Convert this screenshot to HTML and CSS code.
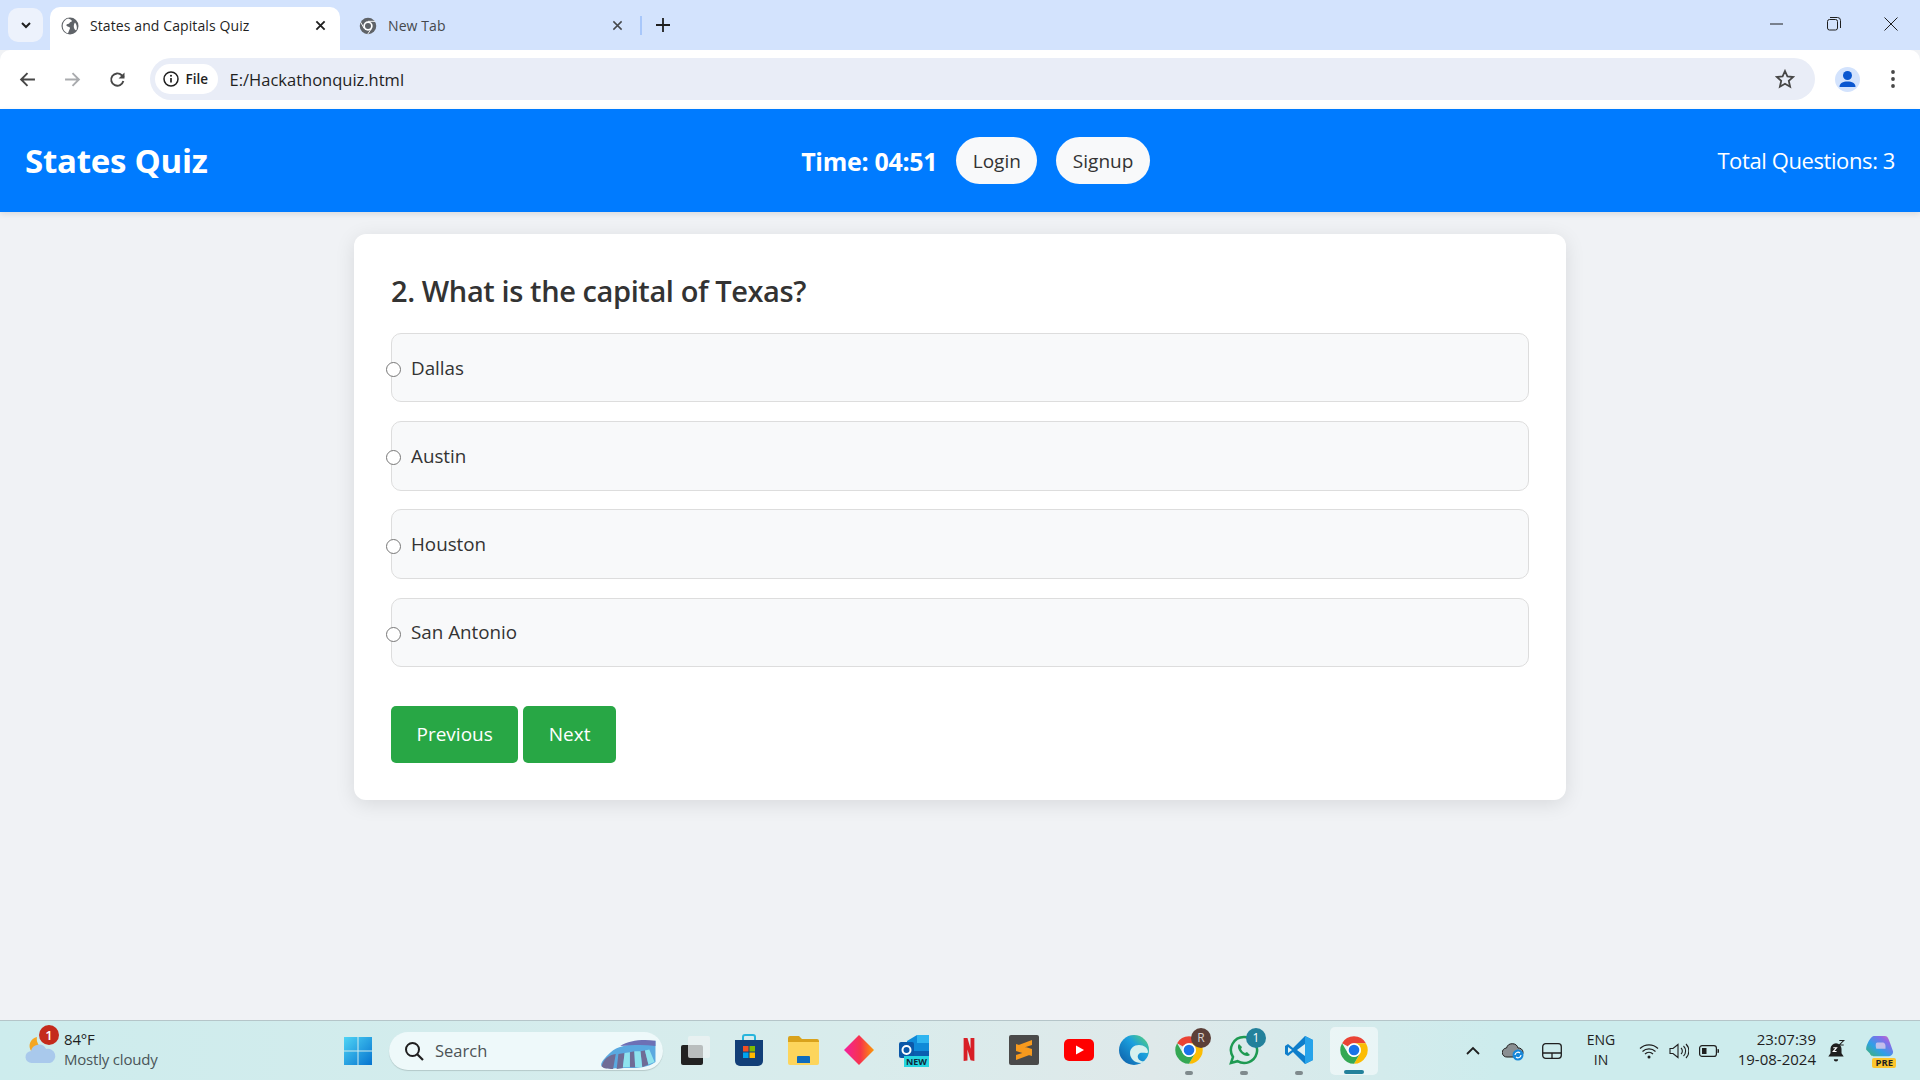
FILE: index.html
```html
<!DOCTYPE html>
<html lang="en">
<head>
    <meta charset="UTF-8">
    <meta name="viewport" content="width=device-width, initial-scale=1.0">
    <title>States and Capitals Quiz</title>
    <link rel="stylesheet" href="styles.css">
</head>
<body>
    <svg class="defs" width="0" height="0">
        <symbol id="chrome" viewBox="0 0 48 48">
            <path fill="#ea4335" d="M24 2A22 22 0 0 1 43.05 13H24A11 11 0 0 0 14.47 18.5L4.95 13A22 22 0 0 1 24 2Z"/>
            <path fill="#fbbc04" d="M43.05 13A22 22 0 0 1 24 46L33.53 29.5A11 11 0 0 0 24 13Z"/>
            <path fill="#34a853" d="M4.95 13L14.47 29.5A11 11 0 0 0 33.53 29.5L24 46A22 22 0 0 1 4.95 13Z"/>
            <circle cx="24" cy="24" r="11" fill="#fff"/>
            <circle cx="24" cy="24" r="8.5" fill="#1a73e8"/>
        </symbol>
    </svg>

    <div class="screen">
        <!-- browser tabs -->
        <div class="tabstrip">
            <div class="tab-search">
                <svg width="12" height="12" viewBox="0 0 12 12"><path d="M2 4l4 4 4-4" fill="none" stroke="#1f1f1f" stroke-width="2"/></svg>
            </div>
            <div class="tab tab-active">
                <svg class="favicon" viewBox="0 0 18 18"><circle cx="9" cy="9" r="8.5" fill="#5f6368"/><path fill="#fff" d="M7 1.500c2 .6 3.500 1.300 4 2.500-.8 1.200-2.200 1-2.600 2.200-.6 1.200-2.700.4-3 1.800-.3 1.200 1.500 1.700 2.800 2 1 .3 1 1.500.3 2.500L7 16.300C4 15.500 1.700 12.500 1.700 9 1.700 5.500 4 2.500 7 1.500zM14 5.500c1.500 1.500 2.500 5 1.500 7.500-1 .5-2-.5-2.500-2-.4-1.500-.3-4 1-5.500z"/></svg>
                <span class="tab-title">States and Capitals Quiz</span>
                <svg class="tab-close" viewBox="0 0 12 12"><path d="M1.500 1.500l9 9M10.500 1.500l-9 9" stroke="#1f1f1f" stroke-width="2"/></svg>
            </div>
            <div class="tab">
                <svg class="favicon" viewBox="0 0 48 48"><circle cx="24" cy="24" r="22" fill="#5f6368"/><circle cx="24" cy="24" r="12.500" fill="#fff"/><circle cx="24" cy="24" r="8" fill="#5f6368"/><path d="M24 11.500H43M14 31L4.500 14M33 31L23 46" stroke="#fff" stroke-width="2.500"/></svg>
                <span class="tab-title tab-title-dim">New Tab</span>
                <svg class="tab-close" viewBox="0 0 12 12"><path d="M1.500 1.500l9 9M10.500 1.500l-9 9" stroke="#45484c" stroke-width="1.600"/></svg>
            </div>
            <div class="tab-sep"></div>
            <svg class="tab-plus" viewBox="0 0 14 14"><path d="M7 0v14M0 7h14" stroke="#1f1f1f" stroke-width="1.800"/></svg>
            <div class="win-controls">
                <svg viewBox="0 0 14 14"><path d="M0 7h13" stroke="#1f1f1f"/></svg>
                <svg viewBox="0 0 14 14"><rect x=".5" y="2.500" width="10" height="10.500" rx="2" fill="none" stroke="#1f1f1f"/><path d="M3 .5h7.500a3 3 0 0 1 3 3V11" fill="none" stroke="#1f1f1f"/></svg>
                <svg viewBox="0 0 14 14"><path d="M.5.5l13 13M13.500.5l-13 13" stroke="#1f1f1f"/></svg>
            </div>
        </div>

        <!-- address bar -->
        <div class="toolbar">
            <svg class="nav-icon" viewBox="0 0 16 16"><path d="M15 8H2M8 2L2 8l6 6" fill="none" stroke="#474747" stroke-width="1.800"/></svg>
            <svg class="nav-icon" viewBox="0 0 16 16"><path d="M1 8h13M8 2l6 6-6 6" fill="none" stroke="#a9abae" stroke-width="1.800"/></svg>
            <svg class="nav-icon" viewBox="0 0 16 16"><path d="M13.500 9.500A5.800 5.800 0 1 1 12 4L14 6" fill="none" stroke="#474747" stroke-width="1.800"/><path d="M14.600 1.500V7H9z" fill="#474747"/></svg>
            <div class="omnibox">
                <div class="site-chip">
                    <svg width="16" height="16" viewBox="0 0 16 16"><circle cx="8" cy="8" r="7" fill="none" stroke="#1f1f1f" stroke-width="1.500"/><path d="M8 7v4.500" stroke="#1f1f1f" stroke-width="1.700"/><circle cx="8" cy="4.800" r="1" fill="#1f1f1f"/></svg>
                    <span>File</span>
                </div>
                <span class="url">E:/Hackathonquiz.html</span>
                <svg class="star" viewBox="0 0 20 20"><path d="M10 2l2.400 5.400 5.800.6-4.400 3.900 1.300 5.800L10 14.700l-5.100 3 1.300-5.800L1.800 8l5.800-.6z" fill="none" stroke="#474747" stroke-width="1.800"/></svg>
            </div>
            <div class="avatar">
                <svg width="19" height="19" viewBox="0 0 19 19"><circle cx="9.500" cy="5.500" r="4.500" fill="#0b57d0"/><path d="M1.500 17c0-4 3.500-5.500 8-5.500s8 1.500 8 5.500z" fill="#0b57d0"/></svg>
            </div>
            <svg class="kebab" viewBox="0 0 4 18"><circle cx="2" cy="2" r="1.900" fill="#474747"/><circle cx="2" cy="9" r="1.900" fill="#474747"/><circle cx="2" cy="16" r="1.900" fill="#474747"/></svg>
        </div>

        <!-- the quiz page -->
        <div class="page">
            <header class="quiz-header">
                <h1 class="quiz-title">States Quiz</h1>
                <div class="header-center">
                    <span class="timer">Time: 04:51</span>
                    <button class="pill-btn">Login</button>
                    <button class="pill-btn">Signup</button>
                </div>
                <span class="total">Total Questions: 3</span>
            </header>

            <main class="quiz-card">
                <h2 class="question">2. What is the capital of Texas?</h2>
                <label class="option"><input type="radio" name="answer"><span>Dallas</span></label>
                <label class="option"><input type="radio" name="answer"><span>Austin</span></label>
                <label class="option"><input type="radio" name="answer"><span>Houston</span></label>
                <label class="option"><input type="radio" name="answer"><span>San Antonio</span></label>
                <div class="quiz-actions">
                    <button class="green-btn">Previous</button>
                    <button class="green-btn">Next</button>
                </div>
            </main>
        </div>

        <!-- windows taskbar -->
        <footer class="taskbar">
            <div class="weather">
                <div class="weather-icon">
                    <svg width="32" height="30" viewBox="0 0 32 30"><path d="M12 1a9 9 0 1 0 10 12A10 10 0 0 1 12 1z" fill="#f5a623"/><path d="M7 27a6 6 0 0 1-1-12 8 8 0 0 1 15-2 7 7 0 0 1 4 14z" fill="#a9c9ec"/></svg>
                    <span class="weather-badge">1</span>
                </div>
                <div class="weather-text">
                    <span class="temp">84°F</span>
                    <span class="sky">Mostly cloudy</span>
                </div>
            </div>
            <div class="start-btn">
                <svg width="30" height="30" viewBox="0 0 30 30">
                    <defs><linearGradient id="win" x1="0" y1="0" x2="1" y2="1"><stop offset="0" stop-color="#4fd4f5"/><stop offset="1" stop-color="#0573cf"/></linearGradient></defs>
                    <path fill="url(#win)" d="M1 1h13.500v13.500H1zM15.500 1H29v13.500H15.500zM1 15.500h13.500V29H1zM15.500 15.500H29V29H15.500z"/>
                </svg>
            </div>
            <div class="search-box">
                <svg width="20" height="20" viewBox="0 0 20 20"><circle cx="8.500" cy="8.500" r="6.500" fill="none" stroke="#1f1f1f" stroke-width="2"/><path d="M13 13l6 6" stroke="#1f1f1f" stroke-width="2.200"/></svg>
                <span>Search</span>
                <svg class="search-art" width="64" height="30" viewBox="0 0 64 34">
                    <path d="M8 18C16 10 24 7 40 6c8-.5 16-3 22-4v24c-8 6-20 7-30 7-14 0-26 2-31-2-2-3 2-8 7-13z" fill="#5aa9e0"/>
                    <path d="M22 8c10-6 24-8 40-6v6C48 6 34 7 22 8z" fill="#6d70b5"/>
                    <path d="M1 31c2-8 8-13 16-14l-3 17c-6 0-11 0-13-3zM20 17l7-1-2 17-7 1zM33 15l5-1 1 18h-6zM45 14l5-1 4 16-7 3z" fill="#6f6c96"/>
                    <path d="M27 16l6-1v17h-8zM38 14l7 0 2 18h-8zM50 13l5-1 6 14-7 3z" fill="#8fe3ee"/>
                </svg>
            </div>
            <div class="task-icons">
                <div class="task-cell">
                    <svg class="taskview" width="30" height="30" viewBox="0 0 30 30"><rect x="0" y="10" width="22" height="20" rx="2" fill="#222"/><rect x="7" y="1" width="22" height="22" rx="2" fill="#eef3f3" opacity=".75"/></svg>
                </div>
                <div class="task-cell">
                    <svg width="30" height="32" viewBox="0 0 30 32"><path d="M9 7V3a2 2 0 0 1 2-2h8a2 2 0 0 1 2 2v4" fill="none" stroke="#27b5dc" stroke-width="2"/><path d="M1 6h28v21a5 5 0 0 1-5 5H6a5 5 0 0 1-5-5z" fill="#123f78"/><rect x="9" y="12" width="5.500" height="5.500" fill="#f25022"/><rect x="15.500" y="12" width="5.500" height="5.500" fill="#7fba00"/><rect x="9" y="18.500" width="5.500" height="5.500" fill="#00a4ef"/><rect x="15.500" y="18.500" width="5.500" height="5.500" fill="#ffb900"/></svg>
                </div>
                <div class="task-cell">
                    <svg width="31" height="30" viewBox="0 0 31 30"><path d="M0 3a2 2 0 0 1 2-2h9l3 3h15a2 2 0 0 1 2 2v4H0z" fill="#d9a21c"/><path d="M0 7h31v21a2 2 0 0 1-2 2H2a2 2 0 0 1-2-2z" fill="#fdd55c"/><path d="M9 22a1 1 0 0 1 1-1h11a1 1 0 0 1 1 1v6H9z" fill="#0f6cbd"/></svg>
                </div>
                <div class="task-cell">
                    <svg width="30" height="30" viewBox="0 0 30 30"><defs><linearGradient id="dia" x1="0" y1="0" x2="1" y2="0"><stop offset="0" stop-color="#f31fa0"/><stop offset=".55" stop-color="#f7354a"/><stop offset="1" stop-color="#fb9a07"/></linearGradient></defs><path d="M15 0l15 15-15 15L0 15z" fill="url(#dia)"/></svg>
                </div>
                <div class="task-cell outlook">
                    <svg width="30" height="30" viewBox="0 0 30 30"><path d="M8 6l10-6h12v16H8z" fill="#0f8ad8"/><path d="M18 0h12v8H18z" fill="#2fb5f0"/><path d="M8 16h22v12a2 2 0 0 1-2 2H10z" fill="#0a5fb0"/><rect x="0" y="7" width="15" height="16" rx="2" fill="#0b58a8"/><circle cx="7.500" cy="15" r="4" fill="none" stroke="#fff" stroke-width="2"/></svg>
                    <span class="new-tag">NEW</span>
                </div>
                <div class="task-cell">
                    <svg width="12" height="23" viewBox="0 0 14 30"><path d="M0 0h5l4 14V0h5v30l-5-1-4-14v14.500L0 30z" fill="#d81f26"/></svg>
                </div>
                <div class="task-cell">
                    <svg width="30" height="30" viewBox="0 0 30 30"><rect width="30" height="30" rx="2" fill="#4a4a4a"/><path d="M23 5L7 11v5l16 5v-5L12 13.500 23 10zM7 25l16-6v-5L7 9v5l11 2.500L7 20z" fill="#f79a1d"/></svg>
                </div>
                <div class="task-cell">
                    <svg width="30" height="22" viewBox="0 0 30 22"><rect width="30" height="22" rx="5" fill="#f00"/><path d="M12 6.500l8 4.500-8 4.500z" fill="#fff"/></svg>
                </div>
                <div class="task-cell">
                    <svg width="30" height="30" viewBox="0 0 30 30"><defs><linearGradient id="edge" x1="0" y1="1" x2="1" y2="0"><stop offset="0" stop-color="#0c59a4"/><stop offset=".6" stop-color="#1ba0de"/><stop offset="1" stop-color="#5fd86a"/></linearGradient></defs><circle cx="15" cy="15" r="15" fill="url(#edge)"/><path d="M29 17c0-4-4-7-9-7-5 0-9 3.500-9 8 0 6 5 10 11 10 2.500 0 4-1 5.500-2-3.500 1-7.500 0-8.500-3-.7-2 0-4 2-5 3-1 8 1 8-1z" fill="#d6f0ee"/></svg>
                </div>
                <div class="task-cell">
                    <svg width="30" height="30"><use href="#chrome"/></svg>
                    <span class="app-badge app-badge-brown">R</span>
                    <span class="run-dot"></span>
                </div>
                <div class="task-cell">
                    <svg width="30" height="30" viewBox="0 0 30 30"><path d="M15 2A13 13 0 0 0 4 22L2 28l6.500-1.800A13 13 0 1 0 15 2z" fill="none" stroke="#1e9a52" stroke-width="2.500"/><path d="M10 9c-2 2-1 6 2 9s7 4 9 2l-3-3-2 1c-2-1-3-2-4-4l1-2z" fill="#1e9a52"/></svg>
                    <span class="app-badge app-badge-teal">1</span>
                    <span class="run-dot"></span>
                </div>
                <div class="task-cell">
                    <svg width="30" height="30" viewBox="0 0 30 30"><path d="M21 1l8 4v20l-8 4L9 17l-5 4-3-2v-8l3-2 5 4z" fill="#0e7ecb"/><path d="M21 1l8 4v20l-8 4z" fill="#27a3ea"/><path d="M21 9v12l-8-6z" fill="#dff1f3"/><path d="M4 12l4 3-4 3z" fill="#dff1f3"/></svg>
                    <span class="run-dot"></span>
                </div>
                <div class="task-cell task-active">
                    <svg width="30" height="30"><use href="#chrome"/></svg>
                    <span class="run-bar"></span>
                </div>
            </div>
            <div class="tray">
                <svg class="tray-icon chev" viewBox="0 0 16 16"><path d="M2 11l6-6 6 6" fill="none" stroke="#1f1f1f" stroke-width="1.800"/></svg>
                <svg class="tray-icon cloud" viewBox="0 0 22 20"><path d="M5 16a4.500 4.500 0 0 1-.5-9A6 6 0 0 1 16 7a4.500 4.500 0 0 1 1 9z" fill="#8a8f92" stroke="#1f1f1f"/><circle cx="16" cy="14" r="5.500" fill="#1687d9"/><path d="M13 14a3 3 0 0 1 5-2M19 14a3 3 0 0 1-5 2" fill="none" stroke="#fff" stroke-width="1.200"/></svg>
                <svg class="tray-icon pad" viewBox="0 0 20 16"><rect x=".7" y=".7" width="18.600" height="14.600" rx="3" fill="none" stroke="#1f1f1f" stroke-width="1.300"/><path d="M1 10h18M10 10v5" stroke="#1f1f1f" stroke-width="1.300"/></svg>
                <div class="lang"><span>ENG</span><span>IN</span></div>
                <svg class="tray-icon wifi" viewBox="0 0 20 16"><path d="M1 5.500a13 13 0 0 1 18 0M3.500 8.500a9.500 9.500 0 0 1 13 0M6 11a6 6 0 0 1 8 0" fill="none" stroke="#1f1f1f" stroke-width="1.200"/><circle cx="10" cy="14" r="1.500" fill="#1f1f1f"/></svg>
                <svg class="tray-icon vol" viewBox="0 0 20 16"><path d="M1 5.500h3L9 1.500v13l-5-4H1z" fill="none" stroke="#1f1f1f" stroke-width="1.100"/><path d="M12 5a4 4 0 0 1 0 6M14.500 3a7 7 0 0 1 0 10M17 1a10 10 0 0 1 0 14" fill="none" stroke="#1f1f1f" stroke-width="1.100"/></svg>
                <svg class="tray-icon batt" viewBox="0 0 20 12"><rect x=".6" y=".6" width="16.800" height="10.800" rx="2.500" fill="none" stroke="#1f1f1f" stroke-width="1.200"/><rect x="3" y="3" width="4.500" height="6" fill="#1f1f1f"/><path d="M18.500 4h.5a1 1 0 0 1 1 1v2a1 1 0 0 1-1 1h-.5z" fill="#1f1f1f"/></svg>
                <div class="clock"><span>23:07:39</span><span>19-08-2024</span></div>
                <svg class="tray-icon bell" viewBox="0 0 18 20"><path d="M9 3a5 5 0 0 0-5 5v4l-2 3h14l-2-3V8a5 5 0 0 0-5-5z" fill="#1f1f1f"/><path d="M7 17.500h4a2 2 0 0 1-4 0z" fill="#1f1f1f"/><path d="M6.500 7h3l-3 3.500h3" fill="none" stroke="#fff" stroke-width="1"/><path d="M12 .5h4l-4 4h4" fill="none" stroke="#1f1f1f" stroke-width="1"/></svg>
                <div class="copilot">
                    <svg width="28" height="22" viewBox="0 0 30 24"><defs><linearGradient id="cop" x1="0" y1="1" x2="1" y2="0"><stop offset="0" stop-color="#3fb56a"/><stop offset=".4" stop-color="#2f9fe8"/><stop offset=".75" stop-color="#8a6be8"/><stop offset="1" stop-color="#e86fb0"/></linearGradient></defs><path d="M8 0h12c3 0 4 2 5 5l4 11c1 3-1 6-4 6H10c-3 0-5 0-6-3L0 15C-1 11 5 0 8 0z" fill="url(#cop)"/><path d="M12 7h6c2 0 3 2 3 4v3H11c-1-3-1-7 1-7z" fill="#f0d4ec" opacity=".7"/></svg>
                    <span class="pre-tag">PRE</span>
                </div>
            </div>
        </footer>
    </div>
</body>
</html>
```

FILE: styles.css
```css
* {
    box-sizing: border-box;
}
html, body {
    margin: 0;
    padding: 0;
}
body {
    font-family: "Open Sans", "Noto Sans", sans-serif;
    color: #333;
    overflow: hidden;
}
.defs {
    display: block;
    height: 0;
}
.screen {
    width: 1920px;
    height: 1080px;
    display: flex;
    flex-direction: column;
    background: #f0f2f5;
}

/* tab strip */
.tabstrip {
    height: 50px;
    background: #d3e3fd;
    display: flex;
    align-items: flex-end;
    flex: none;
}
.tab-search {
    width: 35px;
    height: 34px;
    margin: 0 7px 8px 8px;
    background: #edf2fc;
    border-radius: 10px;
    display: flex;
    align-items: center;
    justify-content: center;
}
.tab {
    width: 290px;
    height: 43px;
    padding: 0 14px 6px 11px;
    display: flex;
    align-items: center;
    border-radius: 10px 10px 0 0;
}
.tab-active {
    background: #fff;
}
.tab + .tab {
    width: 300px;
    padding-left: 19px;
    padding-right: 17px;
}
.favicon {
    width: 18px;
    height: 18px;
    flex: none;
}
.tab-title {
    margin-left: 11px;
    font-size: 14px;
    color: #1f1f1f;
    flex: 1;
    letter-spacing: .1px;
}
.tab-title-dim {
    color: #45484c;
}
.tab-close {
    width: 11px;
    height: 11px;
    flex: none;
}
.tab-sep {
    width: 2px;
    height: 19px;
    margin: 0 0 15px 0;
    background: #a8c7fa;
}
.tab-plus {
    width: 14px;
    height: 14px;
    margin: 0 0 18px 14px;
}
.win-controls {
    margin-left: auto;
    height: 50px;
    padding-right: 22px;
    display: flex;
    gap: 43px;
    align-items: center;
    padding-bottom: 2px;
}
.win-controls svg {
    width: 14px;
    height: 14px;
}

/* address bar */
.toolbar {
    height: 59px;
    background: #fff;
    border-radius: 10px 10px 0 0;
    display: flex;
    align-items: center;
    padding-left: 19px;
    padding-bottom: 1px;
    flex: none;
}
.nav-icon {
    width: 17px;
    height: 17px;
    margin-right: 28px;
}
.omnibox {
    width: 1665px;
    height: 42px;
    margin-left: -4.500px;
    background: #e9edf7;
    border-radius: 21px;
    display: flex;
    align-items: center;
    padding-left: 5px;
    padding-right: 20px;
}
.site-chip {
    width: 63px;
    height: 30px;
    background: #fff;
    border-radius: 15px;
    display: flex;
    align-items: center;
    padding-left: 8px;
    gap: 7px;
    font-size: 13.500px;
    font-weight: 600;
    color: #1f1f1f;
}
.url {
    margin-left: 12px;
    font-size: 16.500px;
    color: #1f1f1f;
}
.star {
    width: 20px;
    height: 20px;
    margin-left: auto;
}
.avatar {
    width: 25px;
    height: 25px;
    margin-left: 20px;
    background: #d3e3fd;
    border-radius: 50%;
    display: flex;
    align-items: center;
    justify-content: center;
}
.kebab {
    width: 4px;
    height: 18px;
    margin-left: 31.500px;
}

/* quiz page */
.page {
    flex: 1;
    min-height: 0;
}
.quiz-header {
    height: 103px;
    background: #007bff;
    color: #fff;
    display: flex;
    justify-content: space-between;
    align-items: center;
    padding: 0 25px;
    box-shadow: 0 2px 6px rgba(0, 0, 0, .1);
}
.quiz-title {
    margin: 0;
    font-size: 33px;
    font-weight: 700;
    letter-spacing: -.25px;
}
.header-center {
    display: flex;
    align-items: center;
    margin-left: 26px;
}
.timer {
    font-size: 25px;
    font-weight: 700;
    letter-spacing: -.3px;
}
.pill-btn {
    height: 47px;
    margin-left: 19px;
    padding: 0 16.500px;
    border: none;
    border-radius: 25px;
    background: #f8f9fa;
    color: #333;
    font-family: inherit;
    font-size: 19px;
}
.total {
    margin-bottom: 2px;
    font-size: 22px;
    letter-spacing: -.4px;
}
.quiz-card {
    width: 1212px;
    height: 566px;
    margin: 22px auto 0;
    padding: 37px;
    background: #fff;
    border-radius: 12px;
    box-shadow: 0 4px 20px rgba(0, 0, 0, .1);
}
.question {
    margin: 0 0 22px;
    height: 40px;
    line-height: 40px;
    font-size: 29px;
    font-weight: 600;
    color: #333;
    letter-spacing: -.4px;
}
.option {
    height: 69.400px;
    margin-bottom: 18.800px;
    background: #f8f9fa;
    border: 1px solid #ddd;
    border-radius: 10px;
    display: flex;
    align-items: center;
    font-size: 18.800px;
    color: #333;
}
.option input {
    width: 15px;
    height: 15px;
    margin: 4px 10px 0 -6px;
}
.quiz-actions {
    display: flex;
    gap: 5px;
    margin-top: 39px;
}
.green-btn {
    height: 57px;
    padding: 0 25.500px;
    border: none;
    border-radius: 5px;
    background: #28a745;
    color: #fff;
    font-family: inherit;
    font-size: 19px;
}

/* taskbar */
.taskbar {
    height: 60px;
    flex: none;
    border-top: 1px solid #b5c5c9;
    background: linear-gradient(90deg, #cdeced 0%, #d9ecec 45%, #dfe9ea 60%, #cdeced 78%);
    display: flex;
    align-items: center;
    color: #1f1f1f;
}
.weather {
    width: 328px;
    padding-left: 25px;
    display: flex;
    align-items: center;
    flex: none;
}
.weather-icon {
    position: relative;
    width: 32px;
    height: 30px;
}
.weather-badge {
    position: absolute;
    top: -11px;
    left: 14px;
    width: 20px;
    height: 20px;
    border-radius: 50%;
    background: #c42b1c;
    color: #fff;
    font-size: 13px;
    font-weight: 600;
    line-height: 20px;
    text-align: center;
}
.weather-text {
    margin: 0 0 3px 7px;
    display: flex;
    flex-direction: column;
    line-height: 20px;
    font-size: 15px;
    letter-spacing: -.2px;
}
.sky {
    color: #4a5558;
}
.start-btn {
    width: 60px;
    display: flex;
    justify-content: center;
    flex: none;
}
.search-box {
    width: 274px;
    height: 38px;
    margin-left: 1px;
    background: #eef9fa;
    border-radius: 19px;
    box-shadow: 0 1px 1px rgba(0, 0, 0, .15);
    display: flex;
    align-items: center;
    padding-left: 15px;
    font-size: 16.500px;
    color: #4c5356;
    position: relative;
    flex: none;
}
.search-box span {
    margin-left: 11px;
}
.search-art {
    position: absolute;
    right: 2px;
    top: 7px;
}
.task-icons {
    display: flex;
    margin-left: 3px;
    flex: none;
}
.task-cell {
    position: relative;
    width: 55px;
    height: 48px;
    display: flex;
    align-items: center;
    justify-content: center;
    padding-bottom: 2px;
}
.taskview {
    margin-left: 4px;
}
.task-active {
    width: 48px;
    margin: 0 3.500px;
    background: rgba(255, 255, 255, .5);
    border-radius: 5px;
}
.new-tag {
    position: absolute;
    right: 12px;
    bottom: 8px;
    padding: 0 2px;
    background: #25d6e0;
    color: #0d2a3a;
    font-size: 9px;
    font-weight: 700;
    line-height: 11px;
}
.app-badge {
    position: absolute;
    top: 1px;
    right: 5px;
    width: 20px;
    height: 20px;
    border-radius: 50%;
    color: #fff;
    font-size: 12px;
    line-height: 20px;
    text-align: center;
}
.app-badge-brown {
    background: #5b3f38;
    color: #d8d0cc;
}
.app-badge-teal {
    background: #23819b;
}
.run-dot {
    position: absolute;
    bottom: 0;
    left: 24px;
    width: 8px;
    height: 4px;
    border-radius: 2px;
    background: #7f8a8d;
}
.run-bar {
    position: absolute;
    bottom: 1px;
    left: 14px;
    width: 20px;
    height: 4px;
    border-radius: 2px;
    background: #23819b;
}
.tray {
    margin-left: auto;
    display: flex;
    align-items: center;
    padding-right: 24px;
}
.tray-icon {
    flex: none;
}
.chev {
    width: 16px;
    height: 16px;
}
.cloud {
    width: 22px;
    height: 20px;
    margin-left: 21px;
}
.pad {
    width: 20px;
    height: 16px;
    margin-left: 18px;
}
.lang {
    width: 36px;
    margin: 0 0 2px 21px;
    display: flex;
    flex-direction: column;
    align-items: center;
    font-size: 14px;
    line-height: 20px;
}
.wifi {
    width: 20px;
    height: 16px;
    margin-left: 20px;
}
.vol {
    width: 20px;
    height: 16px;
    margin-left: 10px;
}
.batt {
    width: 20px;
    height: 12px;
    margin-left: 10px;
}
.clock {
    width: 90px;
    margin: 0 0 3px 7px;
    display: flex;
    flex-direction: column;
    align-items: flex-end;
    font-size: 15px;
    line-height: 20px;
}
.bell {
    width: 20px;
    height: 22px;
    margin-left: 10px;
}
.copilot {
    position: relative;
    width: 30px;
    height: 30px;
    margin-left: 20px;
}
.pre-tag {
    position: absolute;
    right: 0;
    bottom: -2px;
    padding: 0 3px;
    background: #fbc52d;
    border-radius: 2px;
    color: #1f1f1f;
    font-size: 9.500px;
    font-weight: 700;
    line-height: 10px;
}
```
